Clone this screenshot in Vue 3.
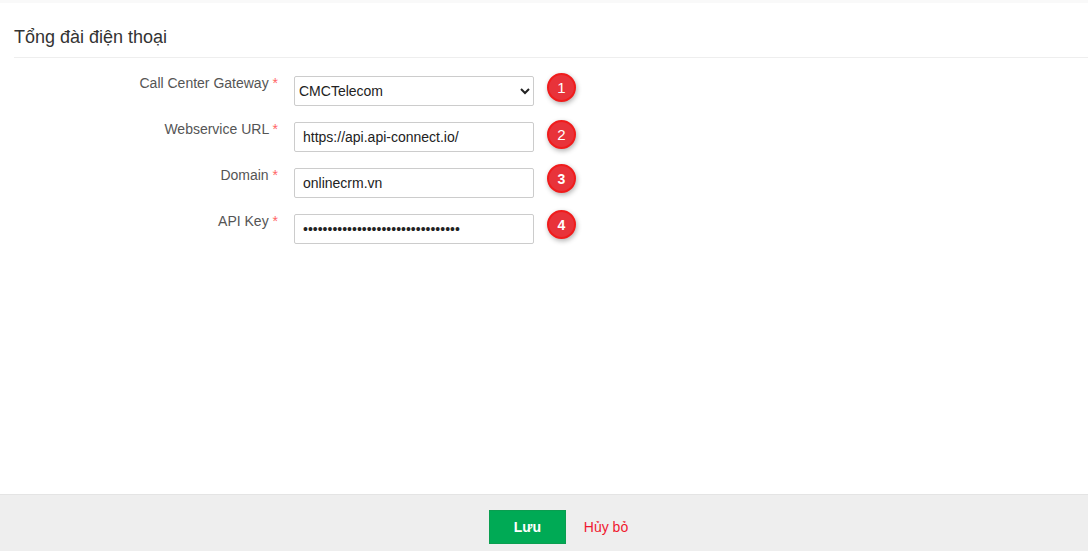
<script setup>
const rows = [
  { label: 'Webservice URL', type: 'text', value: 'https://api.api-connect.io/', n: 2, cls: 'badge-2' },
  { label: 'Domain', type: 'text', value: 'onlinecrm.vn', n: 3, cls: 'badge-3' },
  { label: 'API Key', type: 'password', value: '12345678901234567890123456789012', n: 4, cls: 'badge-4' }
]
</script>

<template>
  <div class="page">
    <div class="topline"></div>
    <main class="content">
      <h1 class="title">Tổng đài điện thoại</h1>
      <form class="form" @submit.prevent>
        <div class="row">
          <label class="label">Call Center Gateway <span class="req">*</span></label>
          <select class="control select">
            <option>CMCTelecom</option>
          </select>
          <span class="badge badge-1">1</span>
        </div>
        <div v-for="r in rows" :key="r.n" class="row">
          <label class="label">{{ r.label }} <span class="req">*</span></label>
          <input class="control input" :type="r.type" :value="r.value" />
          <span class="badge" :class="r.cls">{{ r.n }}</span>
        </div>
      </form>
    </main>
    <footer class="footer">
      <button class="save" type="button">Lưu</button>
      <a class="cancel">Hủy bỏ</a>
    </footer>
  </div>
</template>

<style>
html, body { margin: 0; padding: 0; background: #fff; overflow: hidden; }
</style>

<style scoped>
.page {
  width: 1088px;
  height: 551px;
  display: flex;
  flex-direction: column;
  font-family: "Liberation Sans", Arial, sans-serif;
  color: #333;
  background: #fff;
}
.topline { height: 3px; background: #f9f9f9; }
.content { flex: 1; padding: 0 0 0 14px; }
.title {
  margin: 0;
  height: 55px;
  box-sizing: border-box;
  padding-top: 24px;
  font-size: 18px;
  line-height: 21px;
  font-weight: 400;
  color: #333;
  border-bottom: 1px solid #eee;
}
.form { display: flex; flex-direction: column; gap: 16px; padding-top: 18px; }
.row { display: flex; align-items: flex-start; height: 30px; }
.label {
  width: 280px;
  text-align: right;
  font-size: 14px;
  line-height: 14px;
  color: #555;
  padding-right: 16px;
  box-sizing: border-box;
}
.req { color: #f66; }
.control {
  width: 240px;
  height: 30px;
  box-sizing: border-box;
  border: 1px solid #ccc;
  border-radius: 2px;
  background: #fff;
  font-family: "Liberation Sans", Arial, sans-serif;
  font-size: 14px;
  color: #222;
  outline: none;
  margin: 0;
}
.input { padding: 0 8px; }
.select { padding: 0; }
.badge {
  width: 29px;
  height: 29px;
  box-sizing: border-box;
  margin-left: 13px;
  border: 2px solid #f01c1c;
  border-radius: 50%;
  background: #e8333a;
  color: #fff;
  font-size: 15px;
  display: flex;
  align-items: center;
  justify-content: center;
  box-shadow: 1px 2px 5px rgba(0, 0, 0, 0.3);
}
.badge-1 { margin-top: -3px; }
.badge-2 { margin-top: -2px; }
.badge-3 { margin-top: -4px; font-weight: 700; font-size: 14px; }
.badge-4 { margin-top: -4px; font-weight: 700; font-size: 14px; }
.footer {
  height: 57px;
  box-sizing: border-box;
  border-top: 1px solid #e4e4e4;
  background: #eee;
  display: flex;
  align-items: center;
  justify-content: center;
  padding: 8px 0 0 29px;
}
.save {
  width: 77px;
  height: 34px;
  border: 1px solid #0a9e50;
  background: #00aa55;
  color: #fff;
  font-family: "Liberation Sans", Arial, sans-serif;
  font-size: 14px;
  font-weight: 700;
  padding: 0;
  border-radius: 0;
}
.cancel {
  margin-left: 18px;
  color: #f0182f;
  font-size: 14px;
}
</style>
